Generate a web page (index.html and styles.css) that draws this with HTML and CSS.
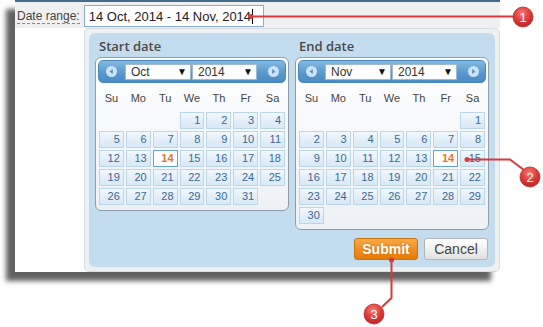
FILE: index.html
```html
<!DOCTYPE html>
<html lang="en">

<head>
    <meta charset="UTF-8" />
    <title>Date range picker</title>
    <link rel="stylesheet" href="styles.css">
</head>

<body>
    <div class="scene">
        <div class="screen">
            <div class="topbar">
                <span class="range-label">Date range:</span>
                <div class="range-field">14 Oct, 2014 - 14 Nov, 2014<span class="caret"></span></div>
            </div>

            <div class="popup">
                <div class="popup-inner">
                    <div class="months">
                        <div class="month">
                            <div class="month-title">Start date</div>
                            <div class="cal">
                                <div class="cal-head">
                                    <svg class="nav" width="11" height="11" viewBox="0 0 11 11"><circle cx="5.5" cy="5.5" r="5.5" fill="#cde2f3"/><path d="M6.8 3 L3.6 5.5 L6.8 8z" fill="#5592c9"/></svg>
                                    <div class="sel sel-month"><span>Oct</span><span class="arrow">▼</span></div>
                                    <div class="sel sel-year"><span>2014</span><span class="arrow">▼</span></div>
                                    <svg class="nav next" width="11" height="11" viewBox="0 0 11 11"><circle cx="5.5" cy="5.5" r="5.5" fill="#cde2f3"/><path d="M4.2 3 L7.4 5.5 L4.2 8z" fill="#5592c9"/></svg>
                                </div>
                                <div class="dow">
                                    <span>Su</span><span>Mo</span><span>Tu</span><span>We</span><span>Th</span><span>Fr</span><span>Sa</span>
                                </div>
                                <div class="days" id="start-days"></div>
                            </div>
                        </div>

                        <div class="month">
                            <div class="month-title">End date</div>
                            <div class="cal">
                                <div class="cal-head">
                                    <svg class="nav" width="11" height="11" viewBox="0 0 11 11"><circle cx="5.5" cy="5.5" r="5.5" fill="#cde2f3"/><path d="M6.8 3 L3.6 5.5 L6.8 8z" fill="#5592c9"/></svg>
                                    <div class="sel sel-month"><span>Nov</span><span class="arrow">▼</span></div>
                                    <div class="sel sel-year"><span>2014</span><span class="arrow">▼</span></div>
                                    <svg class="nav next" width="11" height="11" viewBox="0 0 11 11"><circle cx="5.5" cy="5.5" r="5.5" fill="#cde2f3"/><path d="M4.2 3 L7.4 5.5 L4.2 8z" fill="#5592c9"/></svg>
                                </div>
                                <div class="dow">
                                    <span>Su</span><span>Mo</span><span>Tu</span><span>We</span><span>Th</span><span>Fr</span><span>Sa</span>
                                </div>
                                <div class="days" id="end-days"></div>
                            </div>
                        </div>
                    </div>

                    <div class="actions">
                        <button type="button" class="btn btn-submit">Submit</button>
                        <button type="button" class="btn btn-cancel">Cancel</button>
                    </div>
                </div>
            </div>
        </div>

        <!-- callouts -->
        <svg class="callouts" width="543" height="327" viewBox="0 0 543 327">
            <defs>
                <radialGradient id="ball" cx="0.45" cy="0.3" r="0.75">
                    <stop offset="0" stop-color="#f47a74"/>
                    <stop offset="0.55" stop-color="#dc3a38"/>
                    <stop offset="1" stop-color="#b4201f"/>
                </radialGradient>
            </defs>
            <g fill="none" stroke="#d8393a" stroke-width="2" stroke-linejoin="round">
                <path d="M251 16.5 H514"/>
                <path d="M467 159.5 H510 L524 170"/>
                <path d="M391.5 260 V298 L382 307"/>
            </g>
            <g fill="#d8393a">
                <circle cx="251" cy="16.5" r="2.5"/>
                <circle cx="467" cy="159.5" r="2.5"/>
                <circle cx="391.5" cy="260" r="2.5"/>
            </g>
            <g fill="url(#ball)" stroke="#c02a2a" stroke-width="0.8">
                <circle cx="523" cy="17" r="10"/>
                <circle cx="530" cy="177" r="10"/>
                <circle cx="374" cy="314" r="10"/>
            </g>
            <g class="callout-num" fill="#fff" text-anchor="middle">
                <text x="523" y="21.5">1</text>
                <text x="530" y="181.5">2</text>
                <text x="374" y="318.5">3</text>
            </g>
        </svg>
    </div>

    <script>
        function fillMonth(id, blanks, total, today) {
            const grid = document.getElementById(id);
            for (let i = 0; i < blanks; i++) {
                const empty = document.createElement('span');
                empty.className = 'day empty';
                grid.appendChild(empty);
            }
            for (let d = 1; d <= total; d++) {
                const cell = document.createElement('span');
                cell.className = d === today ? 'day today' : 'day';
                cell.textContent = d;
                grid.appendChild(cell);
            }
        }

        // Oct 2014 starts on Wed, Nov 2014 on Sat
        fillMonth('start-days', 3, 31, 14);
        fillMonth('end-days', 6, 30, 14);
    </script>
</body>

</html>
```

FILE: styles.css
```css
* {
    box-sizing: border-box;
}

body {
    margin: 0;
    background-color: #fff;
    font-family: "Liberation Sans", Arial, sans-serif;
    color: #333;
}

.scene {
    position: relative;
    width: 543px;
    height: 327px;
    padding-left: 15px;
}

.screen {
    width: 485px;
    background-color: #fff;
    box-shadow: -9px 9px 5px rgba(0, 0, 0, 0.62);
}

/* top form row */
.topbar {
    display: flex;
    align-items: flex-start;
    height: 28px;
    padding-left: 2px;
    border-top: 2px solid #3f6d8b;
    background-color: #f0f0f0;
}

.range-label {
    margin-top: 7px;
    font-size: 12px;
    line-height: 14px;
    color: #444;
    border-bottom: 1px dashed #8a8a8a;
}

.range-field {
    display: flex;
    align-items: center;
    width: 180px;
    height: 22px;
    margin-top: 3px;
    margin-left: 4px;
    padding-left: 4px;
    font-size: 13px;
    color: #222;
    background-color: #fff;
    border: 1px solid #88a9d3;
}

.caret {
    display: inline-block;
    width: 1px;
    height: 15px;
    margin-left: 1px;
    background-color: #000;
}

/* popup */
.popup {
    width: 416px;
    margin-left: 69px;
    padding: 4px;
    background-color: #eef1f4;
    border: 1px solid #d6dce2;
    border-radius: 5px;
}

.popup-inner {
    padding: 0 6px 7px;
    background-color: #c3ddef;
    border-radius: 6px;
}

.months {
    display: flex;
    align-items: flex-start;
    gap: 6px;
}

.month {
    flex: 1;
}

.month-title {
    padding: 4px 0 2px 4px;
    font-family: "Open Sans", "Liberation Sans", sans-serif;
    font-weight: 600;
    font-size: 13px;
    line-height: 18px;
    color: #4a4a4a;
}

.cal {
    padding: 2px 2px 5px;
    border: 1px solid #8f9dab;
    border-radius: 6px;
    background: linear-gradient(#ffffff, #edf1f5);
}

.cal-head {
    display: flex;
    align-items: center;
    height: 23px;
    padding: 0 6px 0 7px;
    border: 1px solid #4a87bc;
    border-radius: 5px;
    background: linear-gradient(#84b9e2, #5897cd 60%, #4a8bc4);
}

.nav {
    flex-shrink: 0;
}

.nav.next {
    margin-left: auto;
}

.sel {
    display: flex;
    align-items: center;
    justify-content: space-between;
    height: 16px;
    padding: 0 3px 0 5px;
    font-size: 12px;
    color: #333;
    background-color: #fff;
    border: 1px solid #9fb9d1;
}

.sel-month {
    width: 66px;
    margin-left: 8px;
}

.sel-year {
    width: 65px;
    margin-left: 1px;
}

.arrow {
    font-size: 10px;
    color: #111;
}

.dow,
.days {
    display: grid;
    grid-template-columns: repeat(7, 1fr);
    column-gap: 2px;
    padding: 0 1px;
}

.dow {
    height: 22px;
    margin-top: 4px;
    font-size: 11px;
    line-height: 22px;
    text-align: center;
    color: #444;
}

.days {
    margin-top: 3px;
    row-gap: 2px;
}

.day {
    height: 17px;
    padding-right: 3px;
    font-size: 11px;
    line-height: 15px;
    text-align: right;
    color: #3b6893;
    border: 1px solid #bad6eb;
    background: linear-gradient(#f3f9fd, #e3effa 50%, #d8e9f7);
}

.day.empty {
    border: none;
    background: none;
}

.day.today {
    color: #e8761c;
    font-weight: bold;
    border-color: #65a2d8;
    background: #fff;
}

/* buttons */
.actions {
    display: flex;
    justify-content: flex-end;
    gap: 6px;
    margin-top: 8px;
    padding-right: 1px;
}

.btn {
    width: 64px;
    height: 22px;
    padding: 0;
    font-family: "Liberation Sans", Arial, sans-serif;
    font-size: 14px;
    border-radius: 3px;
    cursor: pointer;
}

.btn-submit {
    font-weight: bold;
    color: #fff;
    text-shadow: 0 0 2px rgba(190, 90, 0, 0.8);
    border: 1px solid #c97414;
    background: linear-gradient(#f9a843, #f08d1e 55%, #e57c0b);
}

.btn-cancel {
    color: #444;
    border: 1px solid #b4b4b4;
    background: linear-gradient(#ffffff, #f1f1f1 50%, #e1e1e1);
}

.callouts {
    position: absolute;
    top: 0;
    left: 0;
    pointer-events: none;
}

.callout-num {
    font-family: "Liberation Sans", Arial, sans-serif;
    font-size: 13px;
}
```
